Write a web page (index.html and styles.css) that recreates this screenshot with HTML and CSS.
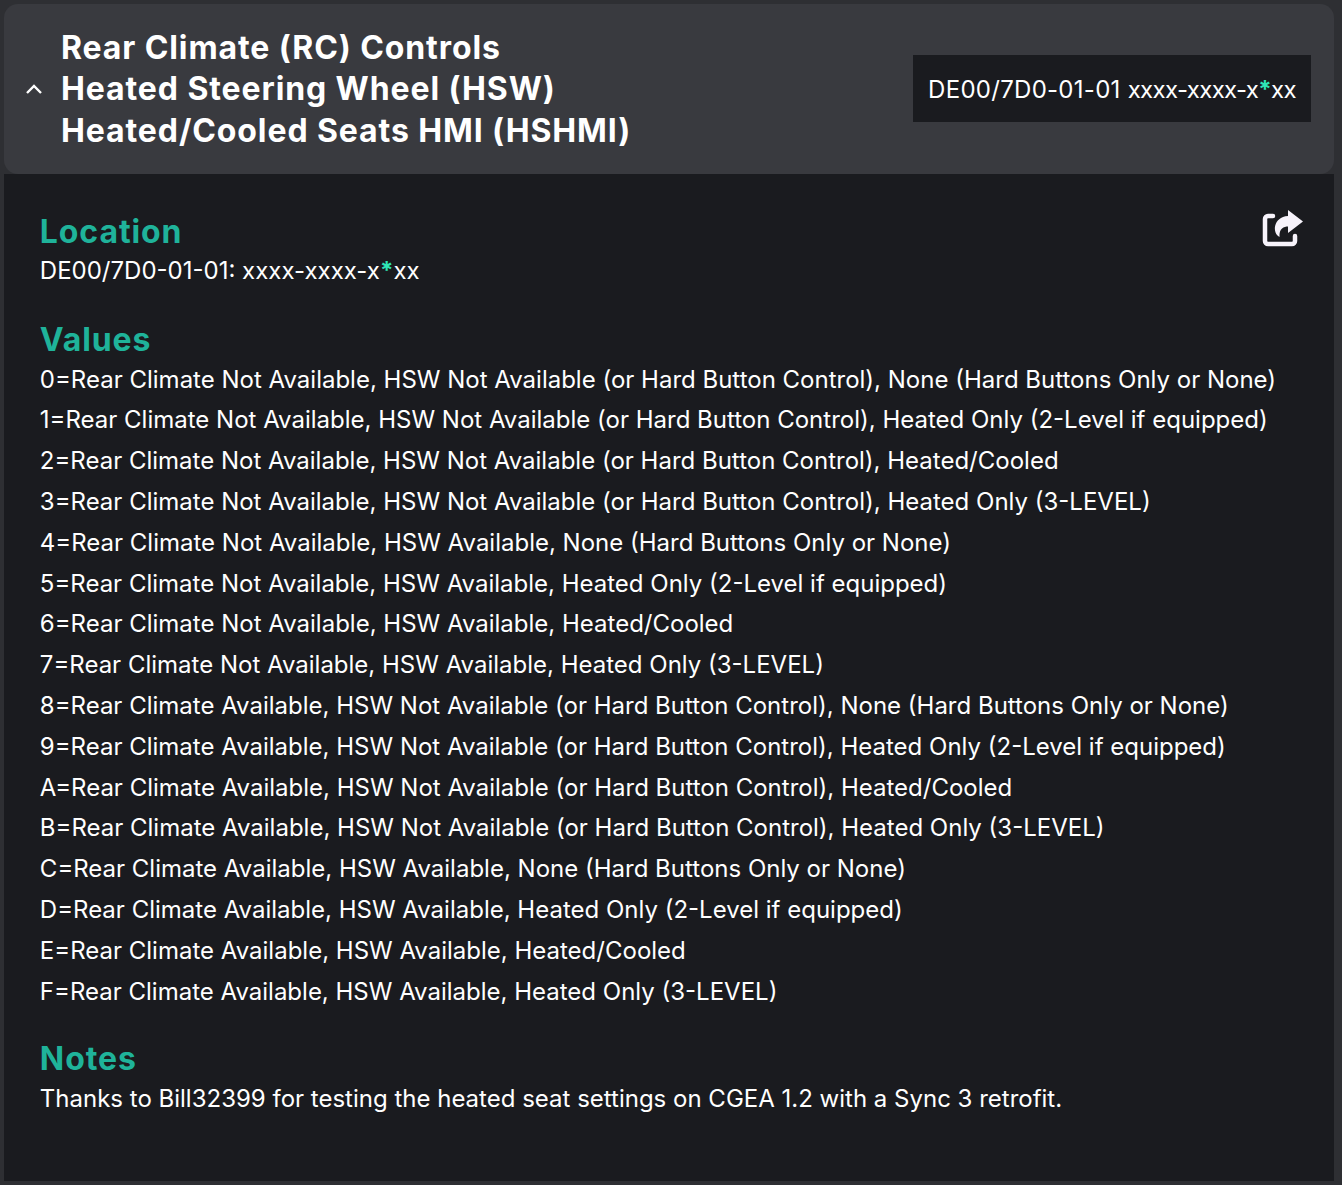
FILE: index.html
```html
<!DOCTYPE html>
<html lang="en">
<head>
<meta charset="utf-8">
<title>Rear Climate Controls</title>
<link rel="stylesheet" href="styles.css">
</head>
<body>
<section class="panel">
  <header class="panel-head">
    <svg class="chevron" viewBox="0 0 18 12" aria-hidden="true"><path d="M2 10 L9 3 L16 10"/></svg>
    <h1 class="title">Rear Climate (RC) Controls<br>Heated Steering Wheel (HSW)<br>Heated/Cooled Seats HMI (HSHMI)</h1>
    <div class="chip"><span class="chip-code">DE00/7D0-01-01</span> <span class="chip-mask">xxxx-xxxx-x<span class="mark">*</span>xx</span></div>
  </header>
  <div class="panel-body">
    <svg class="share" viewBox="0 0 42 38" aria-hidden="true">
      <path class="share-box" d="M11 6H6a3 3 0 0 0-3 3V31a3 3 0 0 0 3 3h24a3 3 0 0 0 3-3v-5"/>
      <path class="share-arrow" d="M26 0 L41 11.5 L26 23 V16.5 C22 16.5 17 18 17.5 27 C10 23 11 7 26 6 Z"/>
    </svg>
    <h2 class="label first">Location</h2>
    <p class="line">DE00/7D0-01-01: xxxx-xxxx-x<span class="mark">*</span>xx</p>
    <h2 class="label">Values</h2>
    <p class="line">0=Rear Climate Not Available, HSW Not Available (or Hard Button Control), None (Hard Buttons Only or None)</p>
    <p class="line">1=Rear Climate Not Available, HSW Not Available (or Hard Button Control), Heated Only (2-Level if equipped)</p>
    <p class="line">2=Rear Climate Not Available, HSW Not Available (or Hard Button Control), Heated/Cooled</p>
    <p class="line">3=Rear Climate Not Available, HSW Not Available (or Hard Button Control), Heated Only (3-LEVEL)</p>
    <p class="line">4=Rear Climate Not Available, HSW Available, None (Hard Buttons Only or None)</p>
    <p class="line">5=Rear Climate Not Available, HSW Available, Heated Only (2-Level if equipped)</p>
    <p class="line">6=Rear Climate Not Available, HSW Available, Heated/Cooled</p>
    <p class="line">7=Rear Climate Not Available, HSW Available, Heated Only (3-LEVEL)</p>
    <p class="line">8=Rear Climate Available, HSW Not Available (or Hard Button Control), None (Hard Buttons Only or None)</p>
    <p class="line">9=Rear Climate Available, HSW Not Available (or Hard Button Control), Heated Only (2-Level if equipped)</p>
    <p class="line">A=Rear Climate Available, HSW Not Available (or Hard Button Control), Heated/Cooled</p>
    <p class="line">B=Rear Climate Available, HSW Not Available (or Hard Button Control), Heated Only (3-LEVEL)</p>
    <p class="line">C=Rear Climate Available, HSW Available, None (Hard Buttons Only or None)</p>
    <p class="line">D=Rear Climate Available, HSW Available, Heated Only (2-Level if equipped)</p>
    <p class="line">E=Rear Climate Available, HSW Available, Heated/Cooled</p>
    <p class="line">F=Rear Climate Available, HSW Available, Heated Only (3-LEVEL)</p>
    <h2 class="label notes">Notes</h2>
    <p class="line">Thanks to Bill32399 for testing the heated seat settings on CGEA 1.2 with a Sync 3 retrofit.</p>
  </div>
</section>
</body>
</html>
```
FILE: styles.css
```css
* { box-sizing: border-box; }
html, body { margin: 0; height: 100%; }
body {
  background: #2e2f33;
  padding: 4px 8px 4px 4px;
  font-family: Inter, "Liberation Sans", sans-serif;
  color: #fff;
}
.panel { display: flex; flex-direction: column; height: 1177px; }
.panel-head {
  display: flex;
  align-items: center;
  height: 170px;
  padding: 0 23px 0 21px;
  background: #393a3f;
  border-radius: 14px;
}
.chevron { width: 18px; height: 12px; flex: none; margin-right: 18px; }
.chevron path { fill: none; stroke: #fff; stroke-width: 2.4; }
.title {
  flex: 1;
  margin: 0;
  font: 700 32px/41.5px Inter, sans-serif;
  letter-spacing: 0.9px;
}
.chip {
  display: flex;
  align-items: center;
  gap: 7px;
  height: 67px;
  margin-bottom: 1px;
  padding: 1px 15px 0 15.5px;
  background: #1a1b1f;
  font-size: 24px;
  white-space: nowrap;
}
.chip-code { letter-spacing: 0.28px; }
.chip-mask { letter-spacing: -0.65px; }
.mark { color: #2ee6b6; font-weight: 700; }
.panel-body {
  position: relative;
  flex: 1;
  padding: 36px 36px 0 35.85px;
  background: #1a1b1f;
}
.share { position: absolute; top: 36px; right: 30px; width: 42px; height: 38px; }
.share-box { fill: none; stroke: #f7f3fb; stroke-width: 4.5; stroke-linecap: round; }
.share-arrow { fill: #f7f3fb; }
.label {
  margin: 26.4px 0 -1px;
  padding-top: 1px;
  font: 700 32px/42px Inter, sans-serif;
  letter-spacing: 0.9px;
  color: #1fb39a;
}
.label.first { margin: 0 0 -2px; padding-top: 2px; line-height: 40.5px; }
.label.notes { margin-top: 25px; }
.line {
  margin: 0;
  font-size: 24px;
  line-height: 40.8px;
  white-space: nowrap;
}
```
